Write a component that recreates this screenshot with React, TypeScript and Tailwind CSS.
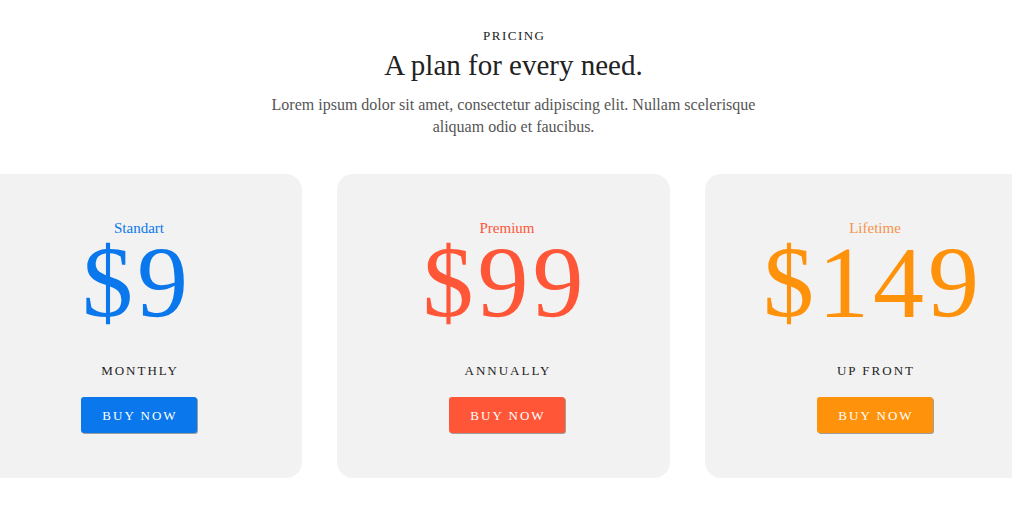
import React from 'react';

interface Plan {
  name: string;
  price: string;
  period: string;
  text: string;
  button: string;
}

const plans: Plan[] = [
  { name: 'Standart', price: '$9', period: 'MONTHLY', text: 'text-[#0a78ec]', button: 'bg-[#0a78ec]' },
  { name: 'Premium', price: '$99', period: 'ANNUALLY', text: 'text-[#ff5638]', button: 'bg-[#ff5638]' },
  { name: 'Lifetime', price: '$149', period: 'UP FRONT', text: 'text-[#ff920b]', button: 'bg-[#ff920b]' },
];

const PlanCard: React.FC<{ plan: Plan }> = ({ plan }) => (
  <div className="w-[333px] shrink-0 rounded-2xl bg-[#f2f2f2] pt-[46px] pb-[45px] pl-[7px] flex flex-col items-center text-center">
    <div className={`text-[15px] leading-[17px] ${plan.name === 'Lifetime' ? 'text-[#f5924a]' : plan.text}`}>
      {plan.name}
    </div>
    <div className={`text-[102px] leading-[92px] tracking-[4px] pr-[4px] ${plan.text}`}>
      {plan.price}
    </div>
    <div className="mt-[34px] text-[13px] leading-[15px] tracking-[2px] pl-[2px] text-[#222]">
      {plan.period}
    </div>
    <button
      className={`mt-[19px] w-[116px] h-[36px] rounded-[3px] text-white text-[13px] leading-[15px] tracking-[2px] pl-[2px] shadow-[1px_1px_0_rgba(0,0,0,0.35)] ${plan.button}`}
    >
      BUY NOW
    </button>
  </div>
);

export default function App() {
  return (
    <div
      className="w-[1012px] h-[512px] bg-white overflow-hidden"
      style={{ fontFamily: '"Liberation Serif", "Times New Roman", serif' }}
    >
      <div className="flex flex-col items-center text-center pt-[28px] pl-[15px]">
        <div className="text-[13px] leading-[15px] tracking-[1.5px] pl-[1.5px] text-[#222]">PRICING</div>
        <h1 className="mt-[6px] text-[29px] leading-[33px] text-[#222]">A plan for every need.</h1>
        <p className="mt-[12px] max-w-[520px] text-[16px] leading-[22px] text-[#555]">
          Lorem ipsum dolor sit amet, consectetur adipiscing elit. Nullam scelerisque aliquam odio et faucibus.
        </p>
      </div>
      <div className="mt-[36px] flex justify-center gap-[35px] pr-[5px]">
        {plans.map((p) => (
          <PlanCard key={p.name} plan={p} />
        ))}
      </div>
    </div>
  );
}
